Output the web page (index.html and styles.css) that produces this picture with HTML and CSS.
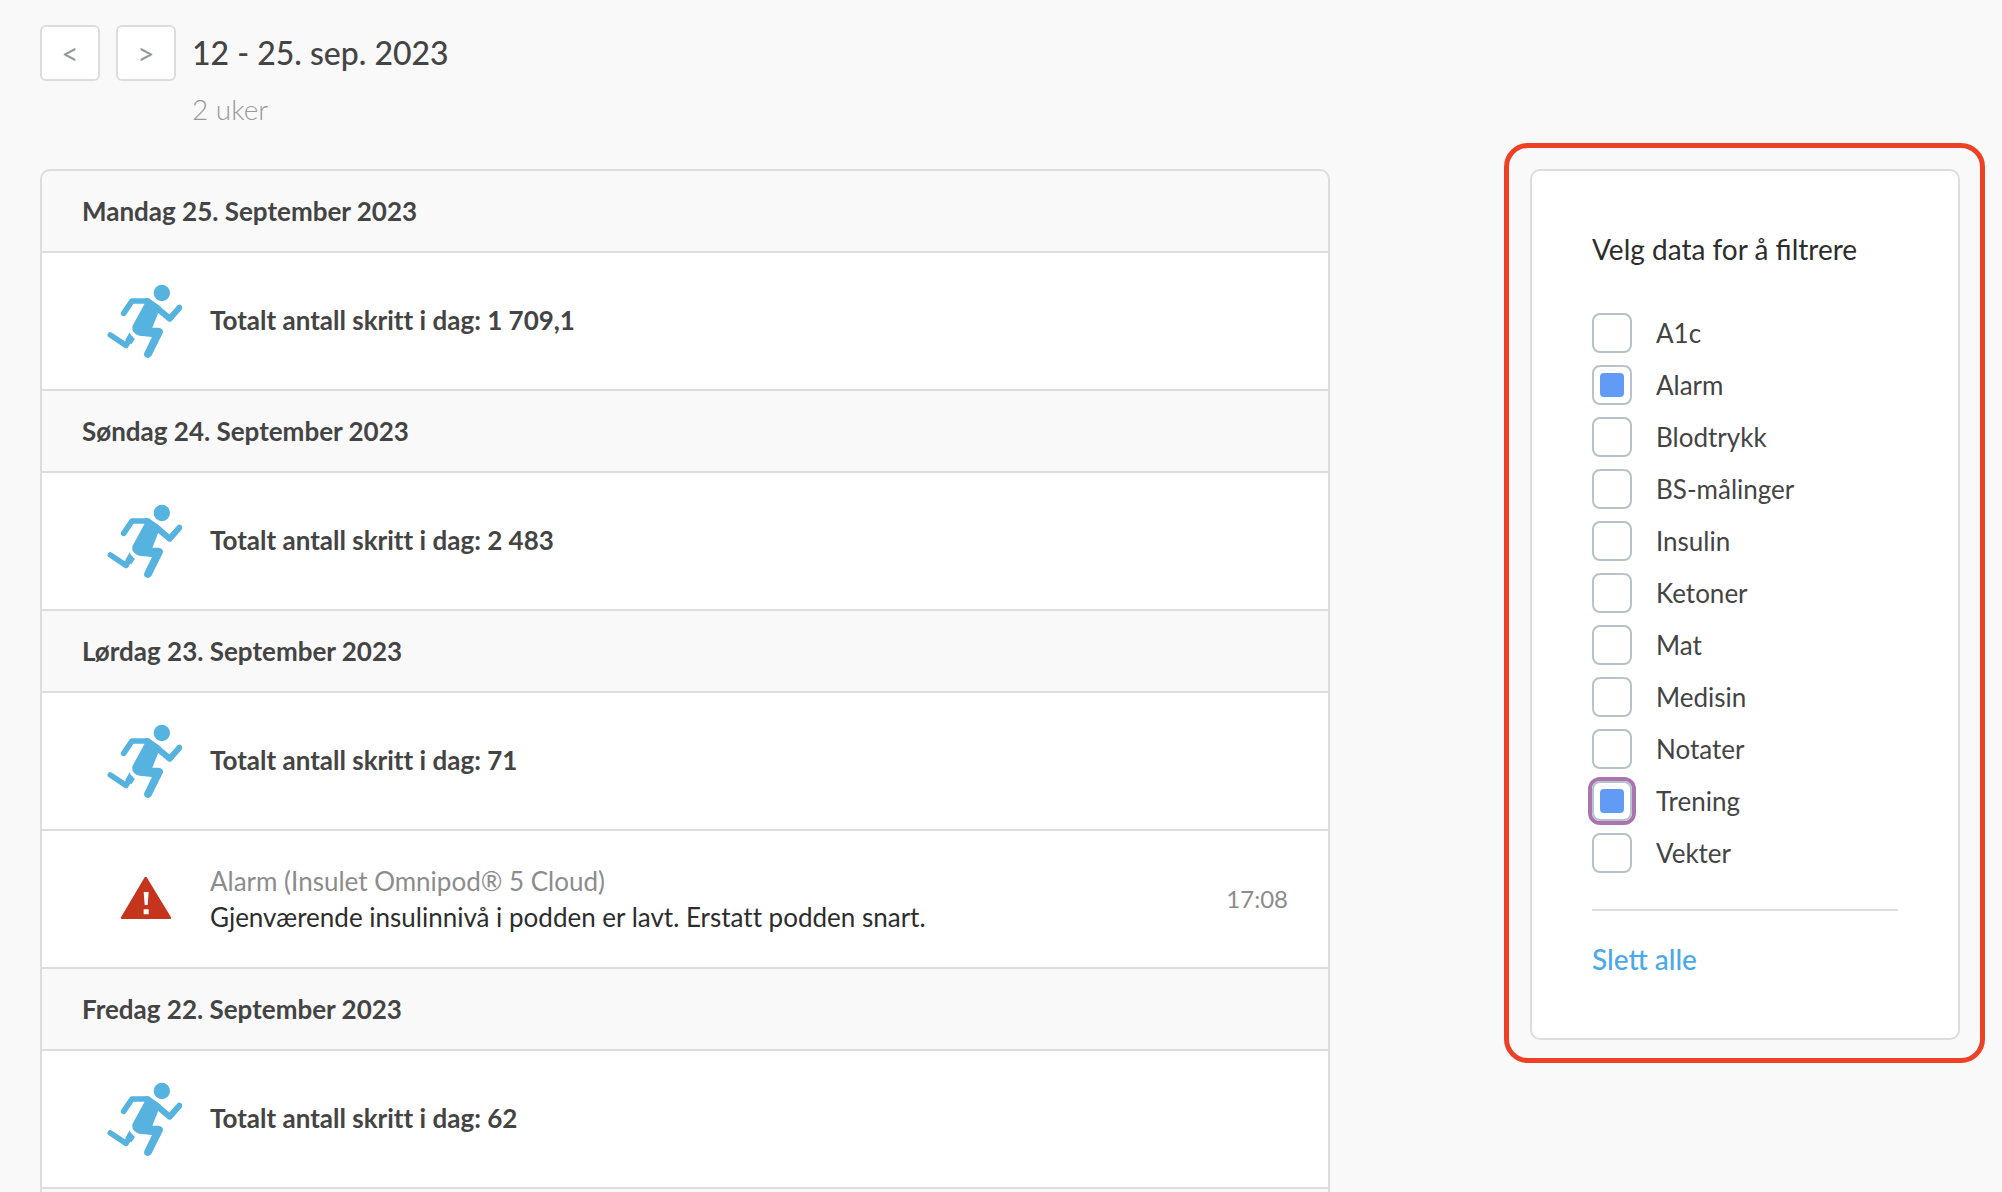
FILE: index.html
```html
<!DOCTYPE html>
<html lang="no">
<head>
    <meta charset="utf-8">
    <title>Dagbok</title>
    <link rel="stylesheet" href="styles.css">
</head>
<body>
    <svg class="sprite" aria-hidden="true">
        <symbol id="runner" viewBox="48 42 228 225">
            <circle cx="215.500" cy="69" r="24.500" fill="currentColor"/>
            <path d="M101 130 L126 93 H172" fill="none" stroke="currentColor" stroke-width="17" stroke-linecap="round" stroke-linejoin="round"/>
            <path d="M196 110 L239 146 L268 113" fill="none" stroke="currentColor" stroke-width="18" stroke-linecap="round" stroke-linejoin="round"/>
            <path d="M165 85 H173 Q178 85 183 89 L214 112 L206 125 L187 173 H206 Q223 176 218 190 L184 258 Q176 267 167 262 Q160 257 163 248 L186 201 L148 197 Q124 191 127 169 L163 103 Z" fill="currentColor"/>
            <path d="M61 195 L108 226 L121 205" fill="none" stroke="currentColor" stroke-width="17" stroke-linecap="round" stroke-linejoin="round"/>
            <path d="M119 187 Q123 200 135 206 L124 223 L106 210 Z" fill="currentColor"/>
        </symbol>
        <symbol id="warning" viewBox="0 0 228 225">
            <path d="M122 46 L195 166 Q197 171 192 171 H48 Q43 171 45 166 L116 46 Q119 43 122 46 Z" fill="#c5341c"/>
            <path d="M113 90 H128 L125 129 H116 Z M113 142 H128 V157 H113 Z" fill="#fff"/>
        </symbol>
    </svg>

    <header class="toolbar">
        <button class="nav-btn" type="button" aria-label="Forrige">&lt;</button>
        <button class="nav-btn" type="button" aria-label="Neste">&gt;</button>
        <div class="period">
            <h1>12 - 25. sep. 2023</h1>
            <p>2 uker</p>
        </div>
    </header>

    <div class="content">
        <main class="log">
            <h2 class="day">Mandag 25. September 2023</h2>
            <div class="entry">
                <svg class="icon"><use href="#runner"/></svg>
                <p class="steps">Totalt antall skritt i dag: 1 709,1</p>
            </div>
            <h2 class="day">Søndag 24. September 2023</h2>
            <div class="entry">
                <svg class="icon"><use href="#runner"/></svg>
                <p class="steps">Totalt antall skritt i dag: 2 483</p>
            </div>
            <h2 class="day">Lørdag 23. September 2023</h2>
            <div class="entry">
                <svg class="icon"><use href="#runner"/></svg>
                <p class="steps">Totalt antall skritt i dag: 71</p>
            </div>
            <div class="entry">
                <svg class="icon"><use href="#warning"/></svg>
                <div class="alarm">
                    <p class="source">Alarm (Insulet Omnipod® 5 Cloud)</p>
                    <p>Gjenværende insulinnivå i podden er lavt. Erstatt podden snart.</p>
                </div>
                <time class="time">17:08</time>
            </div>
            <h2 class="day">Fredag 22. September 2023</h2>
            <div class="entry">
                <svg class="icon"><use href="#runner"/></svg>
                <p class="steps">Totalt antall skritt i dag: 62</p>
            </div>
        </main>

        <aside class="highlight">
            <form class="filter">
                <h2>Velg data for å filtrere</h2>
                <div class="options">
                    <label><input type="checkbox">A1c</label>
                    <label><input type="checkbox" checked>Alarm</label>
                    <label><input type="checkbox">Blodtrykk</label>
                    <label><input type="checkbox">BS-målinger</label>
                    <label><input type="checkbox">Insulin</label>
                    <label><input type="checkbox">Ketoner</label>
                    <label><input type="checkbox">Mat</label>
                    <label><input type="checkbox">Medisin</label>
                    <label><input type="checkbox">Notater</label>
                    <label><input type="checkbox" class="focused" checked>Trening</label>
                    <label><input type="checkbox">Vekter</label>
                </div>
                <div class="clear">
                    <a href="#">Slett alle</a>
                </div>
            </form>
        </aside>
    </div>
</body>
</html>
```

FILE: styles.css
```css
* {
    box-sizing: border-box;
}
body {
    margin: 0;
    min-height: 100vh;
    display: flex;
    flex-direction: column;
    background: #f9f9f9;
    color: #2d2d2d;
    font-family: Lato, sans-serif;
    font-size: 26px;
    line-height: 36px;
}
h1, h2, p {
    margin: 0;
}
.sprite {
    display: none;
}

/* period navigation */
.toolbar {
    display: flex;
    gap: 16px;
    padding: 25px 40px 0;
}
.nav-btn {
    width: 60px;
    height: 56px;
    padding: 0;
    background: #fff;
    border: 2px solid #ddd;
    border-radius: 6px;
    color: #999;
    font-family: inherit;
    font-size: 30px;
    cursor: pointer;
}
.period h1 {
    color: #444;
    font-family: "Lato Medium", Lato, sans-serif;
    font-size: 32px;
    font-weight: 500;
    line-height: 56px;
}
.period p {
    color: #999;
    font-size: 28px;
    font-weight: 300;
    line-height: 56px;
}

.content {
    flex: 1;
    display: flex;
    gap: 174px;
    padding: 6px 17px 0 40px;
}

/* day list */
.log {
    flex: 1;
    margin-top: 26px;
    border: 2px solid #ddd;
    border-bottom: none;
    border-radius: 10px 10px 0 0;
    font-variant-ligatures: no-common-ligatures;
}
.day {
    padding: 22px 40px;
    border-bottom: 2px solid #ddd;
    color: #444;
    font-size: 26px;
    font-weight: 700;
}
.entry {
    display: flex;
    align-items: center;
    gap: 28px;
    min-height: 138px;
    padding: 0 40px 0 64px;
    background: #fff;
    border-bottom: 2px solid #ddd;
}
.icon {
    flex: none;
    width: 76px;
    height: 75px;
    color: #56b2df;
}
.steps {
    padding-bottom: 2px;
    color: #444;
    font-weight: 700;
}
.source {
    color: #8c8c8c;
}
.time {
    margin-left: auto;
    color: #8c8c8c;
    font-size: 24px;
}

/* filter panel */
.highlight {
    flex: none;
    align-self: flex-start;
    width: 481px;
    padding: 21px 20px 18px 21px;
    border: 5px solid #ec4127;
    border-radius: 24px;
}
.filter {
    padding: 60px;
    background: #fff;
    border: 2px solid #ddd;
    border-radius: 10px;
}
.filter h2 {
    font-size: 28px;
    font-weight: 400;
}
.options {
    display: flex;
    flex-direction: column;
    gap: 12px;
    margin: 46px 0 36px;
}
.options label {
    display: flex;
    align-items: center;
    gap: 24px;
    height: 40px;
    color: #444;
}
.options input {
    appearance: none;
    width: 40px;
    height: 40px;
    margin: 0;
    padding: 6px;
    border: 2px solid #b7c3cb;
    border-radius: 8px;
}
.options input:checked::before {
    content: "";
    display: block;
    height: 24px;
    border-radius: 4px;
    background: #619bf5;
}
.options .focused {
    box-shadow: 0 0 0 4px #a974af;
}
.clear {
    padding-top: 30px;
    border-top: 2px solid #ddd;
}
.clear a {
    color: #4aa9ec;
    font-family: "Lato Medium", Lato, sans-serif;
    font-size: 28px;
    font-weight: 500;
    text-decoration: none;
}
```
